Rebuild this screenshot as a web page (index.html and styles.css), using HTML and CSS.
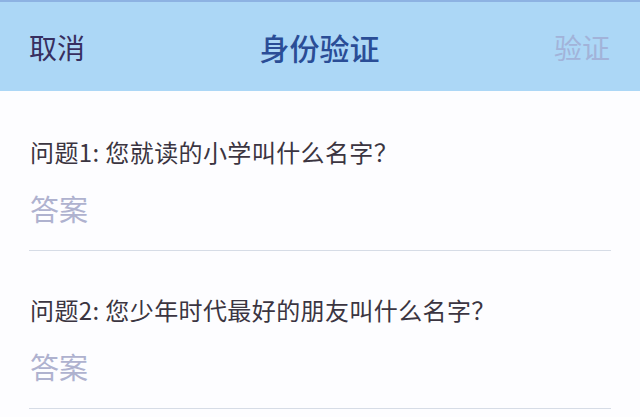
FILE: index.html
```html
<!DOCTYPE html>
<html lang="zh-CN">
<head>
<meta charset="utf-8">
<title>身份验证</title>
<link rel="stylesheet" href="styles.css">
</head>
<body>
<header class="nav">
  <span class="nav-cancel">取消</span>
  <span class="nav-title">身份验证</span>
  <span class="nav-verify">验证</span>
</header>
<main class="qa-list">
  <div class="qa-item">
    <div class="qa-question">问题1: 您就读的小学叫什么名字？</div>
    <input class="qa-answer" type="text" placeholder="答案">
  </div>
  <div class="qa-item">
    <div class="qa-question">问题2: 您少年时代最好的朋友叫什么名字？</div>
    <input class="qa-answer" type="text" placeholder="答案">
  </div>
</main>
</body>
</html>
```

FILE: styles.css
```css
html, body {
  margin: 0;
  padding: 0;
  background: #fdfdff;
  font-family: "Noto Sans CJK SC", "Noto Sans", sans-serif;
}

.nav {
  box-sizing: border-box;
  height: 91px;
  border-top: 2px solid #8db2e2;
  background: #acd7f6;
  display: flex;
  align-items: center;
  justify-content: space-between;
  padding: 0 30px 0 29px;
}

.nav-cancel {
  font-size: 28px;
  color: #372f60;
  line-height: 40px;
  width: 120px;
}

.nav-title {
  font-size: 30px;
  font-weight: 500;
  color: #2a4d96;
  line-height: 40px;
  text-align: center;
}

.nav-verify {
  font-size: 28px;
  color: #a2b3d9;
  line-height: 40px;
  width: 120px;
  text-align: right;
}

.qa-list {
  padding: 2px 29px 0 29px;
}

.qa-item {
  padding: 43px 0 22px 1px;
  border-bottom: 1px solid #d6dce6;
  display: flex;
  flex-direction: column;
}

.qa-question {
  font-size: 24px;
  line-height: 32px;
  color: #3b3541;
  letter-spacing: 0.4px;
}

.qa-answer {
  margin: 20px 0 0 0;
  padding: 0;
  border: none;
  outline: none;
  background: transparent;
  height: 40px;
  font-family: "Noto Sans CJK SC", "Noto Sans", sans-serif;
  font-size: 29px;
  line-height: 40px;
  color: #3b3541;
}

.qa-answer::placeholder {
  color: #afb2cf;
}
```
